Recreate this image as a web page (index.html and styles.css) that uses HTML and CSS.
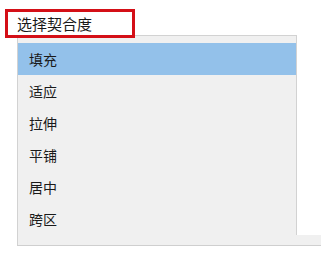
FILE: index.html
```html
<!DOCTYPE html>
<html lang="zh-CN">
<head>
<meta charset="utf-8">
<link rel="stylesheet" href="styles.css">
</head>
<body>
<div class="page">
  <div class="combo"><span class="combo-text">选择契合度</span></div>
  <div class="dropdown">
    <div class="list">
      <div class="item selected">填充</div>
      <div class="item">适应</div>
      <div class="item">拉伸</div>
      <div class="item">平铺</div>
      <div class="item">居中</div>
      <div class="item">跨区</div>
    </div>
    <div class="strip"></div>
  </div>
</div>
</body>
</html>
```
FILE: styles.css
```css
html, body {
  margin: 0;
  padding: 0;
  background: #ffffff;
}
body {
  width: 321px;
  height: 253px;
  overflow: hidden;
  font-family: "Microsoft YaHei", "Noto Sans CJK SC", "Noto Sans", sans-serif;
  font-size: 14px;
  color: #1a1a1a;
}
.page {
  position: relative;
  width: 321px;
  height: 253px;
}
.combo {
  position: absolute;
  left: 5px;
  top: 9px;
  width: 115px;
  height: 23px;
  border: 3px solid #d40f17;
  background: #ffffff;
  z-index: 2;
  display: flex;
  align-items: center;
  padding-left: 9px;
  box-sizing: content-box;
}
.combo-text {
  line-height: 1;
  font-size: 15px;
}
.dropdown {
  margin-left: 17px;
  padding-top: 35px;
  display: flex;
  flex-direction: column;
}
.list {
  width: 278px;
  border: 1px solid #d2d2d2;
  border-bottom: none;
  background: #f0f0f0;
  padding-top: 7px;
}
.item {
  height: 32px;
  line-height: 32px;
  padding-left: 11px;
}
.item.selected {
  background: #93c1ea;
}
.strip {
  height: 10px;
  background: #f0f0f0;
  border-left: 1px solid #d2d2d2;
  border-bottom: 1px solid #cfcfcf;
}
```
